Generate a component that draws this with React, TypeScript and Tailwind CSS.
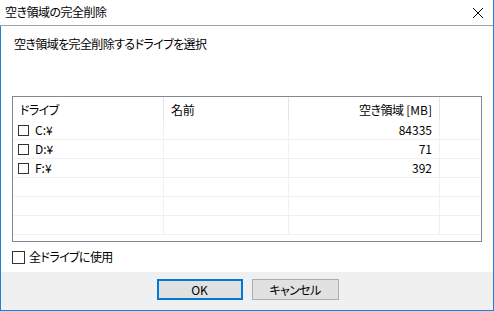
import React from 'react';

const drives = [
  { letter: 'C:¥', name: '', free: '84335' },
  { letter: 'D:¥', name: '', free: '71' },
  { letter: 'F:¥', name: '', free: '392' },
  { letter: '', name: '', free: '' },
  { letter: '', name: '', free: '' },
  { letter: '', name: '', free: '' },
];

function Box({ size }: { size: string }) {
  return <span className={`${size} inline-block border border-[#333333] bg-white shrink-0`} />;
}

export default function App() {
  return (
    <div
      className="w-[494px] h-[311px] flex flex-col bg-white text-black text-[12px] leading-[16px] [font-feature-settings:'palt'] border-r border-b border-[#1883d7] overflow-hidden"
      style={{ fontFamily: '"Noto Sans CJK JP", "Noto Sans", sans-serif' }}
    >
      {/* title bar */}
      <div className="h-[26px] shrink-0 flex items-center justify-between border-b border-[#a0a0a0] pl-[5px] pr-[8px]">
        <span className="-mt-[1px] tracking-[-0.5px]">空き領域の完全削除</span>
        <svg width="12" height="12" viewBox="0 0 12 12" className="mr-[1px]">
          <path d="M1 1 L11 11 M11 1 L1 11" stroke="#000" strokeWidth="1" />
        </svg>
      </div>

      {/* client area */}
      <div className="flex-1 flex flex-col border-l border-[#1883d7]">
        <div className="h-[246px] flex flex-col pl-[11px] pr-[11px] pt-[10px]">
          <div className="pl-[2px] tracking-[-0.6px]">空き領域を完全削除するドライブを選択</div>

          <div className="mt-[44px] h-[146px] border border-[#828790] overflow-hidden flex flex-col">
            <div className="h-[24px] shrink-0 flex">
              <div className="w-[151px] flex items-center pl-[7px] pt-[1px] tracking-[-0.6px] border-r border-[#e5e5e5]">ドライブ</div>
              <div className="w-[125px] flex items-center pl-[7px] pt-[1px] tracking-[-0.3px] border-r border-[#e5e5e5]">名前</div>
              <div className="w-[151px] flex items-center justify-end pr-[7px] pt-[1px] border-r border-[#e5e5e5]">
                <span className="tracking-[-0.5px]">空き領域</span>&nbsp;[MB]
              </div>
              <div className="flex-1" />
            </div>
            {drives.map((d, i) => (
              <div key={i} className="h-[19px] shrink-0 flex border-b border-[#f0f0f0]">
                <div className="w-[151px] flex items-center gap-[6px] pl-[5px] border-r border-[#f0f0f0]">
                  {d.letter && <Box size="w-[11px] h-[11px]" />}
                  <span>{d.letter}</span>
                </div>
                <div className="w-[125px] border-r border-[#f0f0f0]">{d.name}</div>
                <div className="w-[151px] flex items-center justify-end pr-[7px] border-r border-[#f0f0f0]">{d.free}</div>
                <div className="flex-1" />
              </div>
            ))}
          </div>

          <div className="mt-[7px] flex items-center gap-[4px]">
            <Box size="w-[13px] h-[13px]" />
            <span className="tracking-[-0.6px]">全ドライブに使用</span>
          </div>
        </div>

        {/* footer */}
        <div className="flex-1 bg-[#f0f0f0] flex justify-center items-start pt-[7px] gap-[9px] pl-[1px]">
          <button className="w-[86px] h-[21px] bg-[#e1e1e1] border-2 border-[#0078d7] flex items-center justify-center">
            OK
          </button>
          <button className="w-[87px] h-[21px] bg-[#e1e1e1] border border-[#adadad] flex items-center justify-center tracking-[-0.6px]">
            キャンセル
          </button>
        </div>
      </div>
    </div>
  );
}
